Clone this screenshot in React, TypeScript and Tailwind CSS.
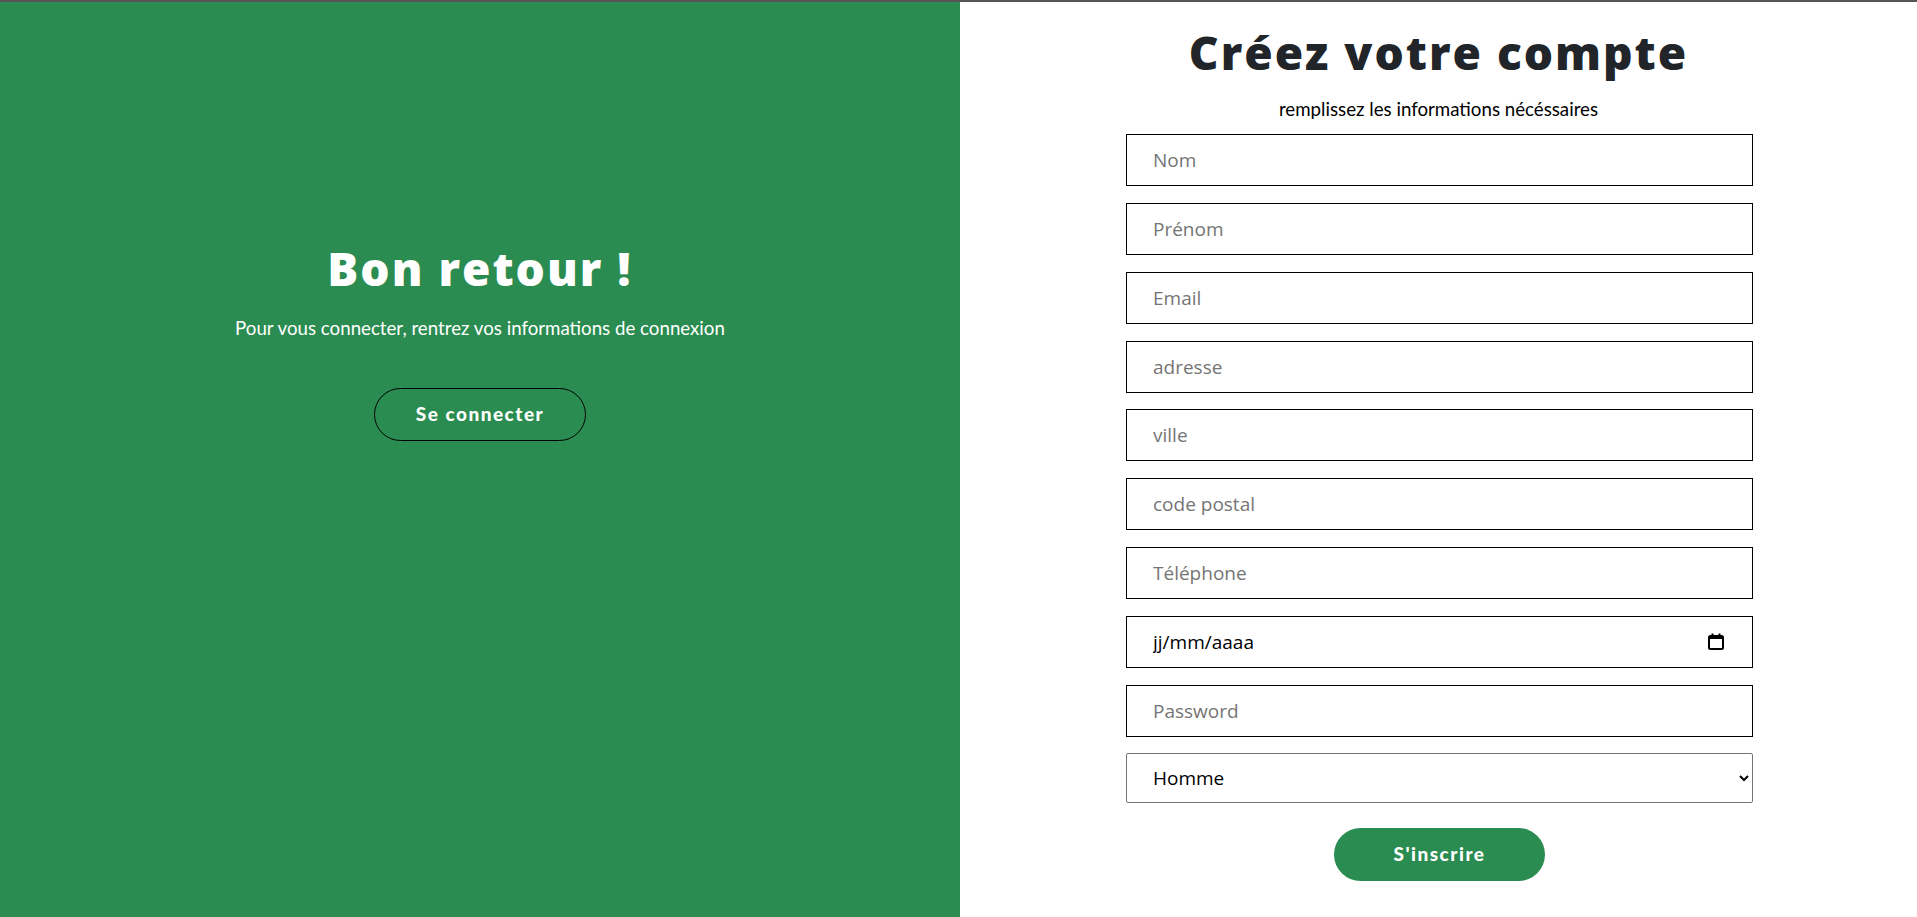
import React from 'react';

const fields = [
    { placeholder: 'Nom', type: 'text' },
    { placeholder: 'Prénom', type: 'text' },
    { placeholder: 'Email', type: 'email' },
    { placeholder: 'adresse', type: 'text' },
    { placeholder: 'ville', type: 'text' },
    { placeholder: 'code postal', type: 'text' },
    { placeholder: 'Téléphone', type: 'tel' },
];

const inputCls =
    "block w-full h-[52px] border border-black bg-white pl-[26px] pr-6 text-[19px] text-black placeholder:text-[#757575] outline-none font-['Open_Sans',sans-serif]";

const CalendarIcon = () => (
    <svg width="16" height="17" viewBox="0 0 16 17" fill="none">
        <rect x="1" y="3" width="14" height="13" rx="1.5" stroke="#000" strokeWidth="2" />
        <rect x="1" y="3" width="14" height="3" fill="#000" />
        <rect x="3.5" y="0.5" width="2" height="4" fill="#000" />
        <rect x="10.5" y="0.5" width="2" height="4" fill="#000" />
    </svg>
);

const App = () => {
    return (
        <div className="flex h-[917px] w-full border-t-2 border-[#555] overflow-hidden">
            {/* Left panel */}
            <div className="w-[960px] shrink-0 bg-[#2b8c51] flex flex-col items-center pt-[239px] text-white">
                <h1 className="font-['Open_Sans',sans-serif] font-extrabold text-[46px] leading-[1.2] tracking-[2px]">Bon retour !</h1>
                <p className="mt-[18px] font-['Lato',sans-serif] text-[18.7px] leading-[28px]">
                    Pour vous connecter, rentrez vos informations de connexion
                </p>
                <button className="mt-[46px] w-[212px] h-[53px] rounded-full border border-black bg-transparent font-['Lato',sans-serif] font-black text-[19px] tracking-[1.5px] text-white">
                    Se connecter
                </button>
            </div>

            {/* Right panel */}
            <div className="flex-1 bg-white flex flex-col items-center">
                <div className="text-center pt-[23px]">
                    <h2 className="font-['Open_Sans',sans-serif] font-extrabold text-[46px] leading-[1.2] tracking-[2px] text-[#212529]">
                        Créez votre compte
                    </h2>
                    <p className="mt-[15px] font-['Lato',sans-serif] text-[18.7px] leading-[28px] text-black">
                        remplissez les informations nécéssaires
                    </p>
                </div>

                <form className="mt-[11px] ml-[2px] w-[627px] flex flex-col gap-[16.8px]">
                    {fields.map((f) => (
                        <input key={f.placeholder} type={f.type} placeholder={f.placeholder} className={inputCls} />
                    ))}
                    <div className="relative">
                        <input type="text" placeholder="jj/mm/aaaa" className={inputCls + ' placeholder:text-black'} />
                        <span className="absolute right-[29px] top-[17px] pointer-events-none">
                            <CalendarIcon />
                        </span>
                    </div>
                    <input type="password" placeholder="Password" className={inputCls} />
                    <select
                        defaultValue="Homme"
                        className="block w-full h-[50px] border border-[#767676] rounded-[2px] bg-white pl-[22px] pr-2 text-[19px] text-black font-['Open_Sans',sans-serif]"
                    >
                        <option>Homme</option>
                        <option>Femme</option>
                    </select>
                    <button
                        type="button"
                        className="self-center mt-[8px] w-[211px] h-[53px] rounded-full bg-[#2b8c51] text-white font-['Lato',sans-serif] font-black text-[19px] tracking-[1.5px]"
                    >
                        S'inscrire
                    </button>
                </form>
            </div>
        </div>
    );
};

export default App;
